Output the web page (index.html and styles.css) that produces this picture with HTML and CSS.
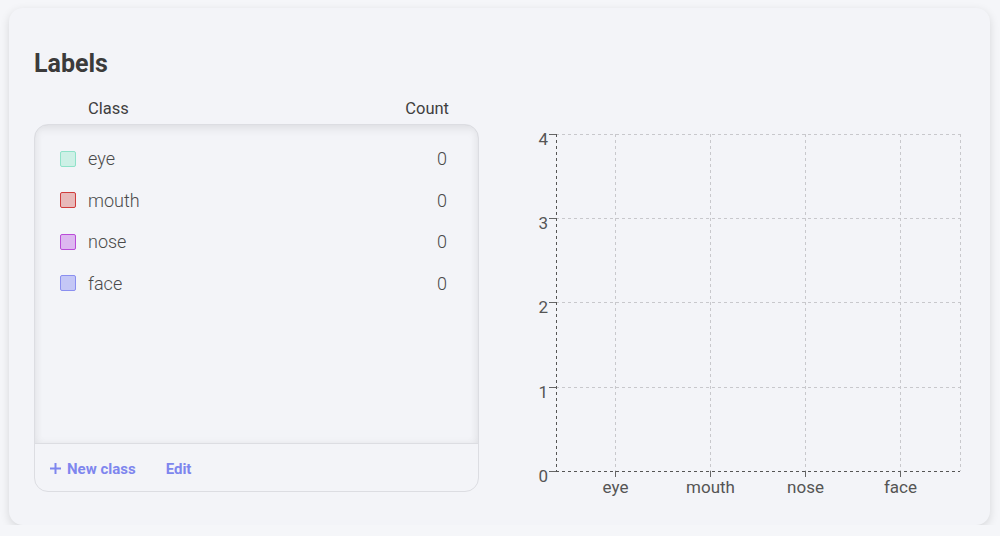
FILE: index.html
```html
<!DOCTYPE html>
<html lang="en">
<head>
    <meta charset="UTF-8">
    <title>Labels</title>
    <link rel="stylesheet" href="styles.css">
</head>
<body>

    <div class="card">
        <h2>Labels</h2>

        <div class="content">
            <div class="classes">
                <div class="head-row">
                    <span>Class</span>
                    <span>Count</span>
                </div>

                <div class="class-box">
                    <div class="class-list">
                        <div class="class-row">
                            <span class="swatch sw-eye"></span>
                            <span class="class-name">eye</span>
                            <span class="class-count">0</span>
                        </div>
                        <div class="class-row">
                            <span class="swatch sw-mouth"></span>
                            <span class="class-name">mouth</span>
                            <span class="class-count">0</span>
                        </div>
                        <div class="class-row">
                            <span class="swatch sw-nose"></span>
                            <span class="class-name">nose</span>
                            <span class="class-count">0</span>
                        </div>
                        <div class="class-row">
                            <span class="swatch sw-face"></span>
                            <span class="class-name">face</span>
                            <span class="class-count">0</span>
                        </div>
                    </div>
                    <div class="class-footer">
                        <button class="link-btn">
                            <svg width="13" height="13" viewBox="0 0 13 13"><path d="M6.5 1v11M1 6.5h11" stroke="currentColor" stroke-width="2"/></svg>
                            New class
                        </button>
                        <button class="link-btn">Edit</button>
                    </div>
                </div>
            </div>

            <div class="chart">
                <svg width="445" height="410" viewBox="0 0 445 410">
                    <g class="grid">
                        <line x1="36" y1="39.5" x2="440" y2="39.5"/>
                        <line x1="36" y1="123.5" x2="440" y2="123.5"/>
                        <line x1="36" y1="207.5" x2="440" y2="207.5"/>
                        <line x1="36" y1="292.5" x2="440" y2="292.5"/>
                        <line x1="95.5" y1="39" x2="95.5" y2="376"/>
                        <line x1="190.5" y1="39" x2="190.5" y2="376"/>
                        <line x1="285.5" y1="39" x2="285.5" y2="376"/>
                        <line x1="380.5" y1="39" x2="380.5" y2="376"/>
                        <line x1="440.5" y1="39" x2="440.5" y2="376"/>
                    </g>
                    <g class="axis">
                        <line x1="36.5" y1="39" x2="36.5" y2="376"/>
                        <line x1="36" y1="376.5" x2="440" y2="376.5"/>
                    </g>
                    <g class="ticks">
                        <line x1="29" y1="39.5" x2="36" y2="39.5"/>
                        <line x1="29" y1="123.5" x2="36" y2="123.5"/>
                        <line x1="29" y1="207.5" x2="36" y2="207.5"/>
                        <line x1="29" y1="292.5" x2="36" y2="292.5"/>
                        <line x1="29" y1="376.5" x2="36" y2="376.5"/>
                        <line x1="95.5" y1="376" x2="95.5" y2="382"/>
                        <line x1="190.5" y1="376" x2="190.5" y2="382"/>
                        <line x1="285.5" y1="376" x2="285.5" y2="382"/>
                        <line x1="380.5" y1="376" x2="380.5" y2="382"/>
                    </g>
                    <g class="ylabels">
                        <text x="28" y="50">4</text>
                        <text x="28" y="134">3</text>
                        <text x="28" y="218">2</text>
                        <text x="28" y="303">1</text>
                        <text x="28" y="387">0</text>
                    </g>
                    <g class="xlabels">
                        <text x="95.5" y="398">eye</text>
                        <text x="190.5" y="398">mouth</text>
                        <text x="285.5" y="398">nose</text>
                        <text x="380.5" y="398">face</text>
                    </g>
                </svg>
            </div>
        </div>
    </div>

</body>
</html>
```

FILE: styles.css
```css
body { margin: 0; font-family: Roboto, "Liberation Sans", sans-serif; background: #f5f6f9; color: #444; }

.card {
    margin: 8px 10px 0 9px;
    height: 517px;
    box-sizing: border-box;
    background: #f3f4f8;
    border-radius: 14px;
    padding: 0 25px;
    box-shadow: 0 3px 10px rgba(0,0,0,0.13);
}
.card h2 { margin: 0; padding-top: 41px; font-size: 25px; line-height: 30px; font-weight: 700; color: #3b3b3b; }

.content { display: flex; gap: 41px; margin-top: 18px; }

/* CLASS LIST */
.classes { width: 445px; flex-shrink: 0; }
.head-row { display: flex; justify-content: space-between; padding: 0 30px 0 54px; font-size: 16.5px; line-height: 24px; color: #3f3f3f; }

.class-box {
    margin-top: 3px;
    height: 368px;
    border: 1px solid #dcdde2;
    border-radius: 14px;
    display: flex; flex-direction: column;
    overflow: hidden;
    box-sizing: border-box;
}
.class-list { flex: 1; padding-top: 13px; box-shadow: inset 0 4px 10px rgba(0,0,0,0.07), inset 0 0 8px rgba(0,0,0,0.04); }
.class-row { height: 41.5px; display: flex; align-items: center; padding: 0 31px 0 25px; }
.swatch { width: 16px; height: 16px; box-sizing: border-box; border-radius: 2px; border: 1.5px solid; margin-right: 12px; }
.sw-eye { background: #cdf0e6; border-color: #8fe2c9; }
.sw-mouth { background: #e8b9ba; border-color: #d03c3c; }
.sw-nose { background: #ddb8f0; border-color: #ba4bd8; }
.sw-face { background: #c4c7f6; border-color: #8a8ff0; }
.class-name { flex: 1; font-size: 18px; font-weight: 300; color: #4a4a4a; }
.class-count { font-size: 18px; font-weight: 300; color: #4a4a4a; }

.class-footer { height: 48px; border-top: 1px solid #dcdde2; display: flex; align-items: center; gap: 30px; padding: 2px 0 0 14px; box-sizing: border-box; }
.link-btn { background: none; border: none; padding: 0; font-family: inherit; font-size: 15px; font-weight: 700; color: #7e86ee; display: flex; align-items: center; gap: 5px; cursor: pointer; }

/* CHART */
.chart { flex-shrink: 0; margin-top: -2px; }
.chart svg { display: block; font-family: Roboto, "Liberation Sans", sans-serif; }
.grid line { stroke: #c8c8cc; stroke-width: 1; stroke-dasharray: 3 3; }
.axis line { stroke: #555; stroke-width: 1; stroke-dasharray: 3 3; }
.ticks line { stroke: #666; stroke-width: 1; }
.ylabels text { font-size: 17px; fill: #555; text-anchor: end; }
.xlabels text { font-size: 17px; fill: #555; text-anchor: middle; }
```
